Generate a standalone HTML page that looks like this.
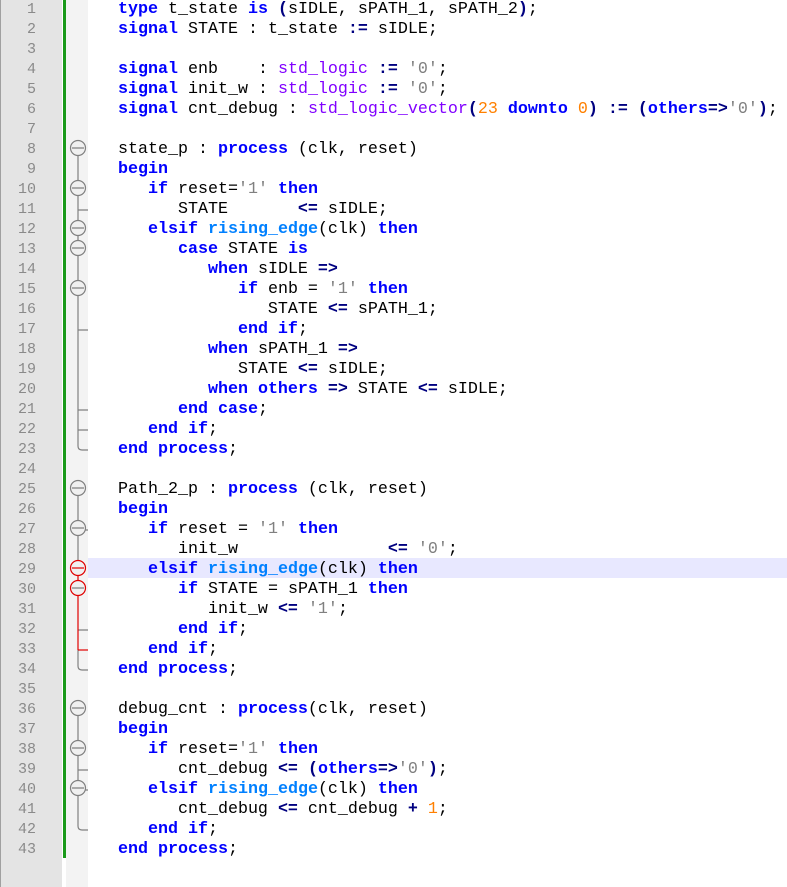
<!DOCTYPE html>
<html><head><meta charset="utf-8"><style>
html,body{margin:0;padding:0;width:787px;height:887px;overflow:hidden;background:#fff;}
#ln{position:absolute;left:0;top:0;width:62px;height:887px;background:#e4e4e4;border-left:1px solid #a0a0a0;box-sizing:border-box;}
#gr{position:absolute;left:63px;top:0;width:3px;height:858px;background:#1a9a1a;}
#fm{position:absolute;left:66px;top:0;width:22px;height:887px;background:#f3f3f3;}
#hl{position:absolute;left:88px;top:558px;width:699px;height:20px;background:#e8e8ff;}
.num{position:absolute;left:0;width:36px;text-align:right;font:15px "Liberation Mono",monospace;color:#8a8a8a;line-height:20px;}
pre{position:absolute;left:118px;top:0px;margin:0;font:16.67px "Liberation Mono",monospace;line-height:20px;color:#000;}
.k{color:#0000ff;font-weight:bold}
.o{color:#000080;font-weight:bold}
.f{color:#0080ff;font-weight:bold}
.s{color:#808080}
.n{color:#ff8000}
.t{color:#8000ff}
svg{position:absolute;left:0;top:0}
</style></head><body>
<div id="ln"></div><div id="gr"></div><div id="fm"></div><div id="hl"></div>
<div id="nums"></div>
<script>
var h='';for(var i=1;i<=43;i++){h+='<div class="num" style="top:'+(20*(i-1))+'px">'+i+'</div>';}
document.getElementById('nums').innerHTML=h;
</script>
<svg width="100" height="887">
<g fill="none" stroke="#808080" stroke-width="1.2">
<line x1="78" y1="148" x2="78" y2="446"/><path d="M78 446 Q78 450 82 450 L88 450"/>
<path d="M78 210 L88 210 M78 330 L88 330 M78 410 L88 410 M78 430 L88 430"/>
<line x1="78" y1="488" x2="78" y2="568"/><path d="M78 530 L88 530 M78 630 L88 630"/>
<line x1="78" y1="650" x2="78" y2="666"/><path d="M78 666 Q78 670 82 670 L88 670"/>
<line x1="78" y1="708" x2="78" y2="826"/><path d="M78 770 L88 770 M78 790 L88 790"/><path d="M78 826 Q78 830 82 830 L88 830"/>
</g>
<g fill="none" stroke="#e00000" stroke-width="1.2">
<line x1="78" y1="568" x2="78" y2="650"/><path d="M78 650 L88 650"/>
</g>
<g fill="#f0f0f0" stroke="#808080" stroke-width="1.2">
<circle cx="78" cy="148" r="7.5"/><circle cx="78" cy="188" r="7.5"/><circle cx="78" cy="228" r="7.5"/><circle cx="78" cy="248" r="7.5"/><circle cx="78" cy="288" r="7.5"/>
<circle cx="78" cy="488" r="7.5"/><circle cx="78" cy="528" r="7.5"/>
<circle cx="78" cy="708" r="7.5"/><circle cx="78" cy="748" r="7.5"/><circle cx="78" cy="788" r="7.5"/>
</g>
<g fill="#f0f0f0" stroke="#e00000" stroke-width="1.2"><circle cx="78" cy="568" r="7.5"/><circle cx="78" cy="588" r="7.5"/></g>
<g stroke="#808080" stroke-width="1.2">
<path d="M72 148H84M72 188H84M72 228H84M72 248H84M72 288H84M72 488H84M72 528H84M72 708H84M72 748H84M72 788H84M72 588H84"/>
</g>
<path d="M72 568H84" stroke="#e00000" stroke-width="1.2"/>
</svg>
<pre><span class="k">type</span> t_state <span class="k">is</span> <span class="o">(</span>sIDLE, sPATH_1, sPATH_2<span class="o">)</span>;
<span class="k">signal</span> STATE : t_state <span class="o">:=</span> sIDLE;

<span class="k">signal</span> enb    : <span class="t">std_logic</span> <span class="o">:=</span> <span class="s">'0'</span>;
<span class="k">signal</span> init_w : <span class="t">std_logic</span> <span class="o">:=</span> <span class="s">'0'</span>;
<span class="k">signal</span> cnt_debug : <span class="t">std_logic_vector</span><span class="o">(</span><span class="n">23</span> <span class="k">downto</span> <span class="n">0</span><span class="o">)</span> <span class="o">:=</span> <span class="o">(</span><span class="k">others</span><span class="o">=&gt;</span><span class="s">'0'</span><span class="o">)</span>;

state_p : <span class="k">process</span> (clk, reset)
<span class="k">begin</span>
   <span class="k">if</span> reset=<span class="s">'1'</span> <span class="k">then</span>
      STATE       <span class="o">&lt;=</span> sIDLE;
   <span class="k">elsif</span> <span class="f">rising_edge</span>(clk) <span class="k">then</span>
      <span class="k">case</span> STATE <span class="k">is</span>
         <span class="k">when</span> sIDLE <span class="o">=&gt;</span>
            <span class="k">if</span> enb = <span class="s">'1'</span> <span class="k">then</span>
               STATE <span class="o">&lt;=</span> sPATH_1;
            <span class="k">end if</span>;
         <span class="k">when</span> sPATH_1 <span class="o">=&gt;</span>
            STATE <span class="o">&lt;=</span> sIDLE;
         <span class="k">when others</span> <span class="o">=&gt;</span> STATE <span class="o">&lt;=</span> sIDLE;
      <span class="k">end case</span>;
   <span class="k">end if</span>;
<span class="k">end process</span>;

Path_2_p : <span class="k">process</span> (clk, reset)
<span class="k">begin</span>
   <span class="k">if</span> reset = <span class="s">'1'</span> <span class="k">then</span>
      init_w               <span class="o">&lt;=</span> <span class="s">'0'</span>;
   <span class="k">elsif</span> <span class="f">rising_edge</span>(clk) <span class="k">then</span>
      <span class="k">if</span> STATE = sPATH_1 <span class="k">then</span>
         init_w <span class="o">&lt;=</span> <span class="s">'1'</span>;
      <span class="k">end if</span>;
   <span class="k">end if</span>;
<span class="k">end process</span>;

debug_cnt : <span class="k">process</span>(clk, reset)
<span class="k">begin</span>
   <span class="k">if</span> reset=<span class="s">'1'</span> <span class="k">then</span>
      cnt_debug <span class="o">&lt;=</span> <span class="o">(</span><span class="k">others</span><span class="o">=&gt;</span><span class="s">'0'</span><span class="o">)</span>;
   <span class="k">elsif</span> <span class="f">rising_edge</span>(clk) <span class="k">then</span>
      cnt_debug <span class="o">&lt;=</span> cnt_debug <span class="o">+</span> <span class="n">1</span>;
   <span class="k">end if</span>;
<span class="k">end process</span>;</pre>
</body></html>
